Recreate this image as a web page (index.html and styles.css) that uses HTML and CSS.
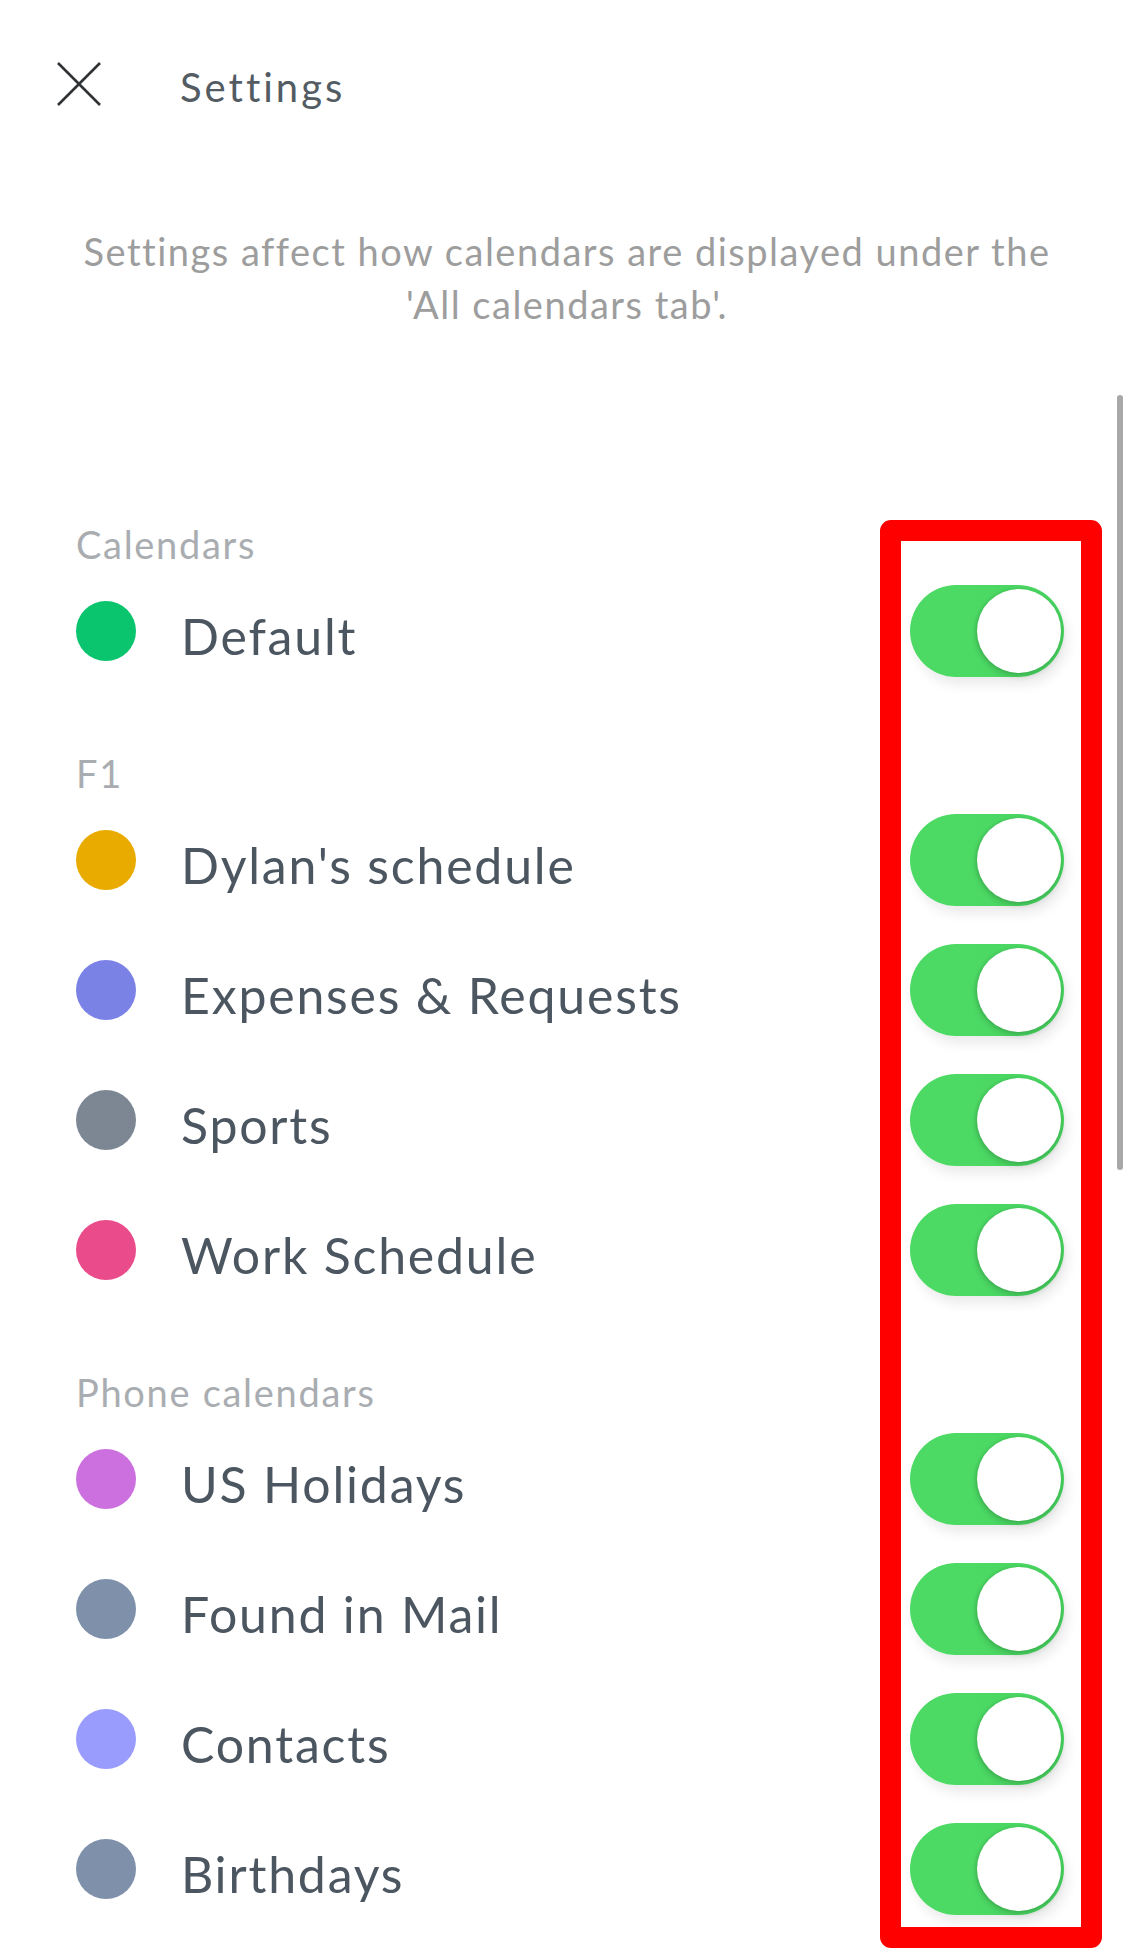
FILE: index.html
```html
<!DOCTYPE html>
<html>
<head>
  <meta charset="UTF-8">
  <title>Settings</title>
  <link rel="stylesheet" href="styles.css">
</head>
<body>
  <div class="header">
    <svg class="close" width="44" height="44" viewBox="0 0 44 44">
      <path d="M1 1 L43 43 M43 1 L1 43" stroke="#2f3336" stroke-width="2.6" fill="none"/>
    </svg>
    <div class="title">Settings</div>
  </div>

  <p class="note">Settings affect how calendars are displayed under the<br>'All calendars tab'.</p>

  <div class="scrollbar"></div>

  <div class="section first">
    <div class="section-title">Calendars</div>
    <div class="row"><span class="dot" style="background:#0bc46e"></span><span class="label">Default</span><span class="toggle"><span class="knob"></span></span></div>
  </div>

  <div class="section">
    <div class="section-title">F1</div>
    <div class="row"><span class="dot" style="background:#e9ab00"></span><span class="label">Dylan's schedule</span><span class="toggle"><span class="knob"></span></span></div>
    <div class="row"><span class="dot" style="background:#7b82e6"></span><span class="label">Expenses &amp; Requests</span><span class="toggle"><span class="knob"></span></span></div>
    <div class="row"><span class="dot" style="background:#7d8794"></span><span class="label">Sports</span><span class="toggle"><span class="knob"></span></span></div>
    <div class="row"><span class="dot" style="background:#ea4b8b"></span><span class="label">Work Schedule</span><span class="toggle"><span class="knob"></span></span></div>
  </div>

  <div class="section">
    <div class="section-title">Phone calendars</div>
    <div class="row"><span class="dot" style="background:#cc6fdf"></span><span class="label">US Holidays</span><span class="toggle"><span class="knob"></span></span></div>
    <div class="row"><span class="dot" style="background:#7e90aa"></span><span class="label">Found in Mail</span><span class="toggle"><span class="knob"></span></span></div>
    <div class="row"><span class="dot" style="background:#9a9cfd"></span><span class="label">Contacts</span><span class="toggle"><span class="knob"></span></span></div>
    <div class="row"><span class="dot" style="background:#7e90aa"></span><span class="label">Birthdays</span><span class="toggle"><span class="knob"></span></span></div>
  </div>

  <div class="highlight"></div>
</body>
</html>
```

FILE: styles.css
```css
body {
  margin: 0;
  font-family: 'Lato', 'Noto Sans', sans-serif;
  background: #fff;
  color: #4b5660;
  position: relative;
  height: 1950px;
  overflow: hidden;
}
.header {
  height: 168px;
  display: flex;
  align-items: center;
  padding-left: 57px;
}
.close {
  display: block;
}
.title {
  margin-left: 79px;
  font-size: 40px;
  letter-spacing: 3px;
  color: #545c63;
  margin-top: 6px;
}
.note {
  margin: 57px 0 0 0;
  text-align: center;
  font-size: 38px;
  letter-spacing: 1.5px;
  line-height: 53px;
  color: #9d9d9d;
}
.section {
  padding: 0 70px 0 76px;
  margin-top: 55px;
}
.section.first {
  margin-top: 191px;
}
.section-title {
  height: 44px;
  line-height: 44px;
  font-size: 38px;
  letter-spacing: 1.7px;
  color: #a9adb1;
}
.row {
  height: 130px;
  display: flex;
  align-items: center;
}
.dot {
  width: 60px;
  height: 60px;
  border-radius: 50%;
  flex-shrink: 0;
}
.label {
  flex: 1;
  margin-left: 45px;
  padding-top: 10px;
  font-size: 50px;
  letter-spacing: 1.8px;
  color: #4b5660;
}
.toggle {
  width: 154px;
  height: 92px;
  border-radius: 46px;
  background: linear-gradient(to right, #4cd964 40%, #47d35f);
  display: flex;
  align-items: center;
  justify-content: flex-end;
  padding-right: 3px;
  box-sizing: border-box;
  box-shadow: 4px 8px 12px rgba(0,0,0,0.08);
}
.knob {
  width: 84px;
  height: 84px;
  border-radius: 50%;
  background: #fff;
  box-shadow: 0 3px 6px rgba(0,0,0,0.18), -2px 0 3px rgba(0,0,0,0.06);
}
.scrollbar {
  position: absolute;
  left: 1117px;
  top: 395px;
  width: 6px;
  height: 775px;
  border-radius: 3px;
  background: #a8a8a8;
}
.highlight {
  position: absolute;
  left: 880px;
  top: 520px;
  width: 222px;
  height: 1428px;
  box-sizing: border-box;
  border: 21px solid #ff0000;
  border-radius: 11px;
}
```
